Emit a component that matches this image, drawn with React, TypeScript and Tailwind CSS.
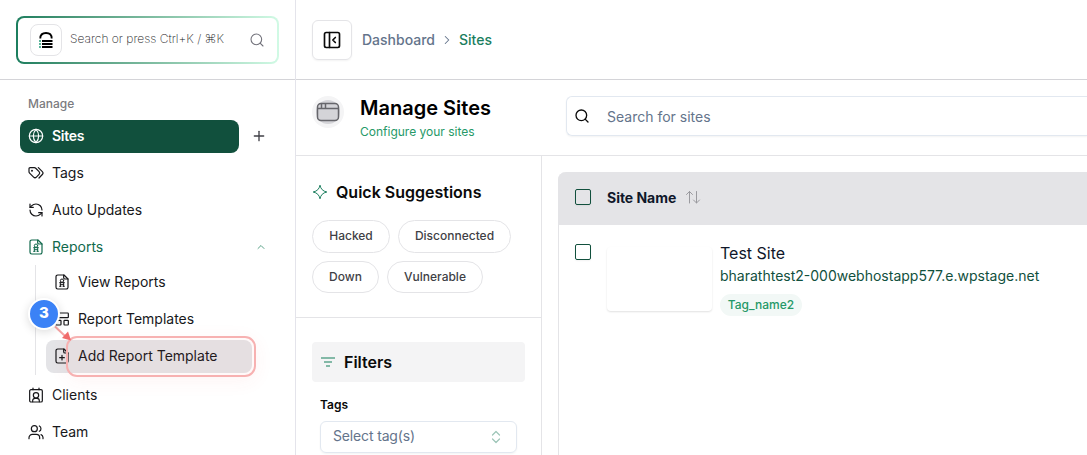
import type { ReactNode } from "react";
import { ChevronRight, ChevronUp, Globe, PanelLeftClose, Plus, RefreshCcw, Search } from "lucide-react";

type IconProps = { className?: string };

function Svg({ className = "", strokeWidth = 1.8, children }: { className?: string; strokeWidth?: number; children: ReactNode }) {
  return (
    <svg viewBox="0 0 24 24" fill="none" stroke="currentColor" strokeWidth={strokeWidth} strokeLinecap="round" strokeLinejoin="round" className={className}>
      {children}
    </svg>
  );
}

function TagsIcon({ className }: IconProps) {
  return (
    <Svg className={className}>
      <path d="M1.500 5.500a1.500 1.500 0 0 1 1.500-1.500h6.500a3 3 0 0 1 2.100.9l5 5a3 3 0 0 1 0 4.200l-4 4a3 3 0 0 1-4.200 0l-6-6a3 3 0 0 1-.9-2.100z" />
      <path d="M15.500 4l6 6a3 3 0 0 1 0 4.200L16.500 19.500" />
      <circle cx="6" cy="8.500" r="0.600" fill="currentColor" />
    </Svg>
  );
}

function ReportIcon({ className }: IconProps) {
  return (
    <Svg className={className}>
      <path d="M15 1.500H5.500A2.500 2.500 0 0 0 3 4v16a2.500 2.500 0 0 0 2.500 2.500h13A2.500 2.500 0 0 0 21 20V7.500z" />
      <path d="M14.500 1.500v4a2 2 0 0 0 2 2H21" />
      <circle cx="12" cy="10" r="2.500" strokeWidth="1.500" />
      <path d="M8.500 13h7M9.500 13v5.500M14.500 13v5.500M9.500 16h5M8.500 18.500h2M13.500 18.500h2" strokeWidth="1.500" />
    </Svg>
  );
}

function TemplateIcon({ className }: IconProps) {
  return (
    <Svg className={className}>
      <rect x="2.500" y="3" width="19" height="7" rx="1" />
      <rect x="2.500" y="14" width="8" height="7" rx="1" />
      <rect x="15" y="14" width="6.500" height="7" rx="1" />
    </Svg>
  );
}

function AddFileIcon({ className }: IconProps) {
  return (
    <Svg className={className}>
      <path d="M15 1.500H5.500A2.500 2.500 0 0 0 3 4v16a2.500 2.500 0 0 0 2.500 2.500h13A2.500 2.500 0 0 0 21 20V7.500z" />
      <path d="M14.500 1.500v4a2 2 0 0 0 2 2H21M12 11v7M8.500 14.500h7" />
    </Svg>
  );
}

function ClientsIcon({ className }: IconProps) {
  return (
    <Svg className={className}>
      <rect x="2.500" y="4" width="19" height="18.500" rx="2" />
      <path d="M7.500 1.500V4M16.500 1.500V4M7 22v-1.500a3.500 3.500 0 0 1 3.500-3.500h3a3.500 3.500 0 0 1 3.500 3.500V22" />
      <circle cx="12" cy="12.500" r="4" />
    </Svg>
  );
}

function TeamIcon({ className }: IconProps) {
  return (
    <Svg className={className}>
      <circle cx="9.500" cy="7" r="4.500" />
      <path d="M1.500 22v-1.500a5 5 0 0 1 5-5h6a5 5 0 0 1 5 5V22M17 3a4.500 4.500 0 0 1 0 8M22.500 22v-2a5 5 0 0 0-3-4" />
    </Svg>
  );
}

function LogoIcon() {
  return (
    <svg viewBox="0 0 16 18" className="h-[18px] w-4" fill="none">
      <path d="M2.300 7.500C2.300 3.800 4.300 2 8 2s5.700 1.800 5.700 5.500" stroke="#000" strokeWidth="1.800" />
      <path d="M4 10h10.500M4 13h10.500M4 16h10.500" stroke="#000" strokeWidth="2" />
      <path d="M1 10h2M1 13h2M1 16h2" stroke="#269d7b" strokeWidth="1.500" />
    </svg>
  );
}

function SiteWindowIcon() {
  return (
    <svg viewBox="0 0 32 32" className="size-8 shrink-0" fill="none">
      <circle cx="16" cy="16" r="16" fill="#f4f4f5" />
      <circle cx="16" cy="16" r="12" fill="#d4d4d8" />
      <rect x="5.500" y="7.500" width="21" height="17" rx="3.500" fill="#d4d4d8" stroke="#66666b" strokeWidth="1.500" />
      <path d="M5.500 12.500h21M9.500 8v4M13.500 8v4" stroke="#66666b" strokeWidth="1.500" />
    </svg>
  );
}

function NavItem({ icon, label, className = "" }: { icon: ReactNode; label: string; className?: string }) {
  return (
    <div className={`flex h-[33px] items-center gap-2 rounded-lg px-2 pb-px text-[14px] leading-[21px] ${className}`}>
      {icon}
      <span className="pb-px">{label}</span>
    </div>
  );
}

function Sidebar() {
  return (
    <aside className="flex w-[296px] shrink-0 flex-col border-r border-[#e4e4eb]">
      <div className="h-20 shrink-0 border-b border-[#d4d4d8] px-4 pt-4">
        <div className="h-12 w-[263px] rounded-lg bg-linear-to-r from-[#1b7e5e] to-[#d1fae5] p-[2px]">
          <div className="flex h-full items-center rounded-md bg-white px-3">
            <div className="flex size-8 items-center justify-center rounded-lg border border-[#e4e4e7]">
              <LogoIcon />
            </div>
            <span className="ml-2 flex-1 pb-0.5 text-[12px] font-extralight whitespace-nowrap text-[#18181b]">Search or press Ctrl+K / ⌘K</span>
            <Search className="size-4 text-[#71717a]" strokeWidth={1.6} />
          </div>
        </div>
      </div>
      <nav className="flex flex-col px-5 pt-4 text-[#18181b]">
        <div className="mb-2 px-2 text-[12px] leading-4 font-medium text-[#7b7b80]">Manage</div>
        <div className="flex flex-col gap-1">
          <div className="flex items-center">
            <NavItem icon={<Globe className="size-4" strokeWidth={1.8} />} label="Sites" className="w-[219px] bg-[#11503d] font-semibold tracking-[-0.3px] text-white" />
            <Plus className="mb-px ml-3 size-4 text-[#3f3f46]" />
          </div>
          <NavItem icon={<TagsIcon className="size-4" />} label="Tags" />
          <NavItem icon={<RefreshCcw className="size-4" strokeWidth={1.8} />} label="Auto Updates" />
          <div className="flex items-center text-[#11694c]">
            <NavItem icon={<ReportIcon className="size-4" />} label="Reports" className="flex-1" />
            <ChevronUp className="mr-2 mb-px size-3 text-[#5ba389]" />
          </div>
        </div>
        <div className="mt-px ml-[15px] flex flex-col gap-1 border-l border-[#e4e4e7] pt-px pb-[2px] pl-[10px]">
          <NavItem icon={<ReportIcon className="size-4" />} label="View Reports" />
          <NavItem icon={<TemplateIcon className="size-4" />} label="Report Templates" />
          <NavItem icon={<AddFileIcon className="size-4" />} label="Add Report Template" className="w-[206px] bg-[#e4e4e7]" />
        </div>
        <div className="mt-1 flex flex-col gap-1">
          <NavItem icon={<ClientsIcon className="size-4" />} label="Clients" />
          <NavItem icon={<TeamIcon className="size-4" />} label="Team" />
        </div>
      </nav>
    </aside>
  );
}

function Callout() {
  return (
    <>
      <div className="absolute top-[336px] left-[66px] h-[41px] w-[190px] rounded-[11px] border-2 border-[#f7b1b1] bg-[#f87171]/[0.04] shadow-[0_4px_20px_rgba(239,68,68,0.06)]" />
      <svg className="absolute top-[320px] left-[50px] h-6 w-6" viewBox="0 0 24 24">
        <path d="M5 6.500L15 16" stroke="#f5a3a3" strokeWidth="2" />
        <path d="M21 20.500L12 18L18 11.500Z" fill="#f06a6a" />
      </svg>
      <div className="absolute top-[298px] left-[28px] flex size-8 items-center justify-center rounded-full border-2 border-white bg-[#3b82f6] pb-px text-[15px] font-extrabold text-white shadow-[0_2px_10px_rgba(0,0,0,0.14)]">3</div>
    </>
  );
}

function Pill({ label, className }: { label: string; className: string }) {
  return (
    <span className={`flex items-center justify-center rounded-full border border-[#e4e4e7] pb-px text-[12px] font-medium text-[#3f3f46] ${className}`}>{label}</span>
  );
}

function FilterPanel() {
  return (
    <section className="w-[246px] shrink-0 border-r border-[#e4e4e7]">
      <div className="h-[162px] border-b border-[#e4e4e7] px-4 pt-6">
        <div className="flex h-6 items-center gap-2">
          <svg viewBox="0 0 16 16" className="size-4" fill="none" stroke="#1b7e5e" strokeLinejoin="round">
            <path d="M8 1.200Q9 6.800 14.800 8Q9 9.200 8 14.800Q7 9.200 1.200 8Q7 6.800 8 1.200Z" />
          </svg>
          <h2 className="text-[16px] font-semibold text-[#0a0a0a]">Quick Suggestions</h2>
        </div>
        <div className="mt-4 flex gap-2">
          <Pill label="Hacked" className="h-[33px] w-[78px]" />
          <Pill label="Disconnected" className="h-[33px] w-[113px]" />
        </div>
        <div className="mt-2 flex gap-2">
          <Pill label="Down" className="h-8 w-[67px]" />
          <Pill label="Vulnerable" className="h-8 w-24" />
        </div>
      </div>
      <div className="px-4 pt-6">
        <div className="flex h-10 items-center gap-2 rounded bg-[#f4f4f5] px-2">
          <svg viewBox="0 0 16 16" className="size-4" stroke="#83b9a7" strokeWidth="2">
            <path d="M1 4h14M4 8h8M6 12h4" />
          </svg>
          <h2 className="text-[16px] font-semibold text-[#0a0a0a]">Filters</h2>
        </div>
        <div className="px-2 pt-[15px]">
          <div className="text-[12px] leading-4 font-semibold text-[#0a0a0a]">Tags</div>
          <div className="mt-2 flex h-8 items-center justify-between rounded-md border border-[#e2e8f0] px-3 text-[14px] text-[#64748b] shadow-xs">
            <span className="pb-[3px] tracking-[-0.15px]">Select tag(s)</span>
            <svg viewBox="0 0 16 16" className="size-4" fill="none" stroke="#9dc5b7" strokeWidth="1.200" strokeLinecap="round" strokeLinejoin="round">
              <path d="M4.500 6L8 2.500L11.500 6M4.500 10L8 13.500L11.500 10" />
            </svg>
          </div>
        </div>
      </div>
    </section>
  );
}

function Checkbox() {
  return <span className="size-4 shrink-0 rounded-[2px] border border-[#11503d] shadow-xs" />;
}

function SitesTable() {
  return (
    <section className="min-w-0 flex-1 pt-4 pl-4">
      <div className="h-[300px] rounded-tl-lg border-l border-[#e4e4e7]">
        <div className="-ml-px flex h-[53px] items-center rounded-tl-lg bg-[#e4e4e7] pb-[3px] pl-[17px]">
          <Checkbox />
          <span className="ml-4 text-[14px] font-bold tracking-[-0.03px] text-[#0f172a]">Site Name</span>
          <svg viewBox="0 0 16 16" className="ml-[9px] size-4" fill="none" stroke="#9a9a9f" strokeLinecap="round" strokeLinejoin="round">
            <path d="M4.500 14V2.500M1.500 5.500L4.500 2.500L7.500 5.500M11.500 2.500V14M8.500 11L11.500 14L14.500 11" />
          </svg>
        </div>
        <div className="flex pt-[19px] pl-4">
          <Checkbox />
          <div className="mt-[3px] ml-4 h-16 w-[105px] rounded shadow-[0_1px_2px_rgba(0,0,0,0.12)]" />
          <div className="-mt-[3px] ml-2">
            <div className="pb-px text-[16px] leading-6 text-[#0f172a]">Test Site</div>
            <div className="text-[14px] leading-5 text-[#11503d]">bharathtest2-000webhostapp577.e.wpstage.net</div>
            <div className="mt-2 flex h-[22px] w-[82px] items-center justify-center rounded-full bg-[#f2f8f6] text-[12px] font-medium text-[#269968]">Tag_name2</div>
          </div>
        </div>
      </div>
    </section>
  );
}

export default function App() {
  return (
    <div className="relative flex h-[455px] w-[1087px] overflow-hidden bg-white font-['Inter',sans-serif]">
      <Sidebar />
      <main className="flex min-w-0 flex-1 flex-col">
        <header className="flex h-20 shrink-0 items-center border-b border-[#d4d4d8] px-4 pt-px">
          <button className="flex size-10 items-center justify-center rounded-md border border-[#e4e4e7] shadow-xs">
            <PanelLeftClose className="size-5 text-[#0a0a0a]" />
          </button>
          <span className="ml-[10px] pb-0.5 text-[14px] font-medium text-[#64748b]">Dashboard</span>
          <ChevronRight className="mx-[5px] size-[14px] text-[#64748b]" strokeWidth={1.8} />
          <span className="pb-0.5 text-[14px] font-medium text-[#1b7e5e]">Sites</span>
        </header>
        <div className="flex h-[76px] shrink-0 items-start border-b border-[#e4e4e7] pt-4 pl-4">
          <SiteWindowIcon />
          <div className="-mt-1 ml-4 w-[206px]">
            <h1 className="text-[20px] leading-8 font-semibold text-black">Manage Sites</h1>
            <p className="text-[12px] leading-4 text-[#269968]">Configure your sites</p>
          </div>
          <div className="flex h-10 flex-1 items-center rounded-l-md border border-r-0 border-[#e2e8f0] pl-[7px] shadow-xs">
            <Search className="size-4 text-[#0a0a0a]" />
            <span className="ml-[17px] text-[14px] text-[#64748b]">Search for sites</span>
          </div>
        </div>
        <div className="flex min-h-0 flex-1">
          <FilterPanel />
          <SitesTable />
        </div>
      </main>
      <Callout />
    </div>
  );
}
